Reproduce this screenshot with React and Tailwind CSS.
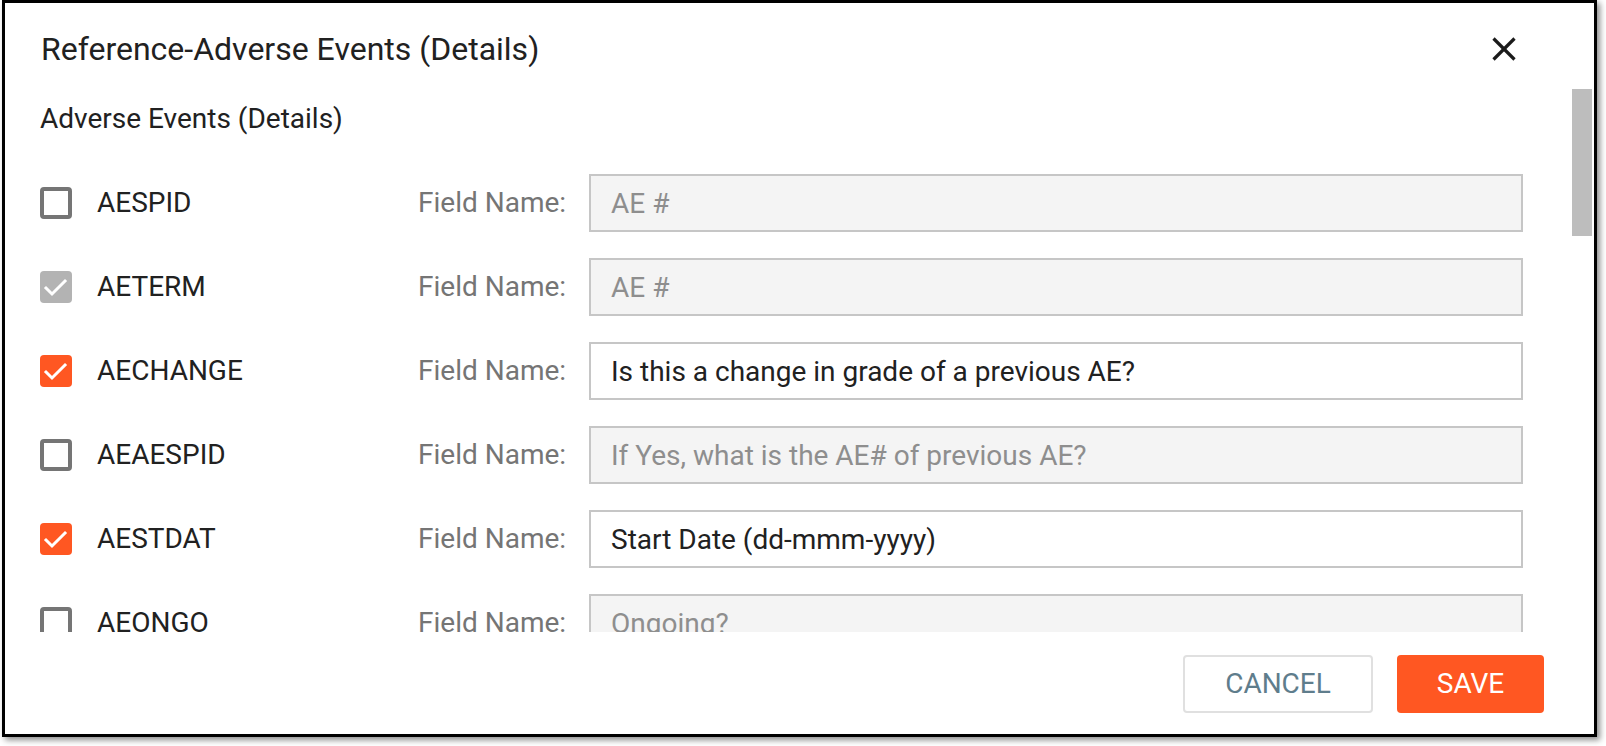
import { useState } from 'react';

const campos = [
  { id: 'AESPID', estado: 'off', texto: 'AE #' },
  { id: 'AETERM', estado: 'locked', texto: 'AE #' },
  { id: 'AECHANGE', estado: 'on', texto: 'Is this a change in grade of a previous AE?' },
  { id: 'AEAESPID', estado: 'off', texto: 'If Yes, what is the AE# of previous AE?' },
  { id: 'AESTDAT', estado: 'on', texto: 'Start Date (dd-mmm-yyyy)' },
  { id: 'AEONGO', estado: 'off', texto: 'Ongoing?' },
];

function Check({ estado, onToggle }) {
  if (estado === 'off') {
    return (
      <button
        onClick={onToggle}
        className="w-[32px] h-[32px] shrink-0 rounded-[4px] border-[4px] border-[#757575] bg-white"
      />
    );
  }

  const fondo = estado === 'locked' ? 'bg-[#b3b3b3]' : 'bg-[#ff5722]';

  return (
    <button
      onClick={estado === 'locked' ? undefined : onToggle}
      className={`w-[32px] h-[32px] shrink-0 rounded-[4px] flex items-center justify-center ${fondo}`}
    >
      <svg className="w-[32px] h-[32px]" viewBox="0 0 32 32" fill="none" stroke="white" strokeWidth="3" strokeLinecap="square">
        <polyline points="6 17 12 23 25 10" />
      </svg>
    </button>
  );
}

export default function App() {
  const [filas, setFilas] = useState(campos);

  const toggle = (id) => {
    setFilas(filas.map((f) => (f.id === id ? { ...f, estado: f.estado === 'on' ? 'off' : 'on' } : f)));
  };

  return (
    <div className="w-[1606px] h-[746px] bg-white font-['Roboto',sans-serif]">
      <div className="ml-[2px] w-[1595px] h-[737px] border-[3px] border-black bg-white flex flex-col shadow-[3px_3px_6px_rgba(0,0,0,0.45)]">

        {/* HEADER */}
        <header className="h-[86px] shrink-0 flex items-start justify-between pl-[36px] pr-[78px] pt-[26px]">
          <h2 className="text-[32px] leading-[40px] text-[#212121]">Reference-Adverse Events (Details)</h2>
          <button className="h-[40px] flex items-center">
            <svg className="w-[24px] h-[24px]" viewBox="0 0 24 24" fill="none" stroke="#1a1a1a" strokeWidth="3.2">
              <line x1="1.5" y1="1.5" x2="22.5" y2="22.5" />
              <line x1="22.5" y1="1.5" x2="1.5" y2="22.5" />
            </svg>
          </button>
        </header>

        {/* BODY */}
        <div className="flex-1 min-h-0 flex">
          <div className="flex-1 overflow-hidden pl-[35px] pr-[49px] pt-[12px]">
            <p className="text-[28px] leading-[36px] text-[#212121] mb-[37px]">Adverse Events (Details)</p>

            <div className="flex flex-col gap-[26px]">
              {filas.map((fila) => {
                const activo = fila.estado === 'on';
                return (
                  <div key={fila.id} className="h-[58px] flex items-center">
                    <Check estado={fila.estado} onToggle={() => toggle(fila.id)} />
                    <span className="ml-[25px] w-[321px] text-[28px] text-[#212121]">{fila.id}</span>
                    <span className="w-[171px] text-[28px] text-[#757575]">Field Name:</span>
                    <input
                      readOnly
                      disabled={!activo}
                      defaultValue={activo ? fila.texto : ''}
                      placeholder={activo ? '' : fila.texto}
                      className={`flex-1 h-[58px] border-2 border-[#c6c6c6] px-[20px] text-[28px] outline-none ${
                        activo ? 'bg-white text-[#212121]' : 'bg-[#f4f4f4] placeholder:text-[#8e8e8e]'
                      }`}
                    />
                  </div>
                );
              })}
            </div>
          </div>

          {/* barra de scroll */}
          <div className="w-[22px] shrink-0">
            <div className="w-[20px] h-[147px] bg-[#bdbdbd]" />
          </div>
        </div>

        {/* FOOTER */}
        <footer className="h-[102px] shrink-0 flex justify-end items-start gap-[24px] pt-[23px] pr-[50px]">
          <button className="w-[190px] h-[58px] rounded-[4px] border-2 border-[#e0e0e0] text-[28px] text-[#5f7d8c]">
            CANCEL
          </button>
          <button className="w-[147px] h-[58px] rounded-[4px] bg-[#ff5722] text-[28px] text-white">
            SAVE
          </button>
        </footer>
      </div>
    </div>
  );
}
